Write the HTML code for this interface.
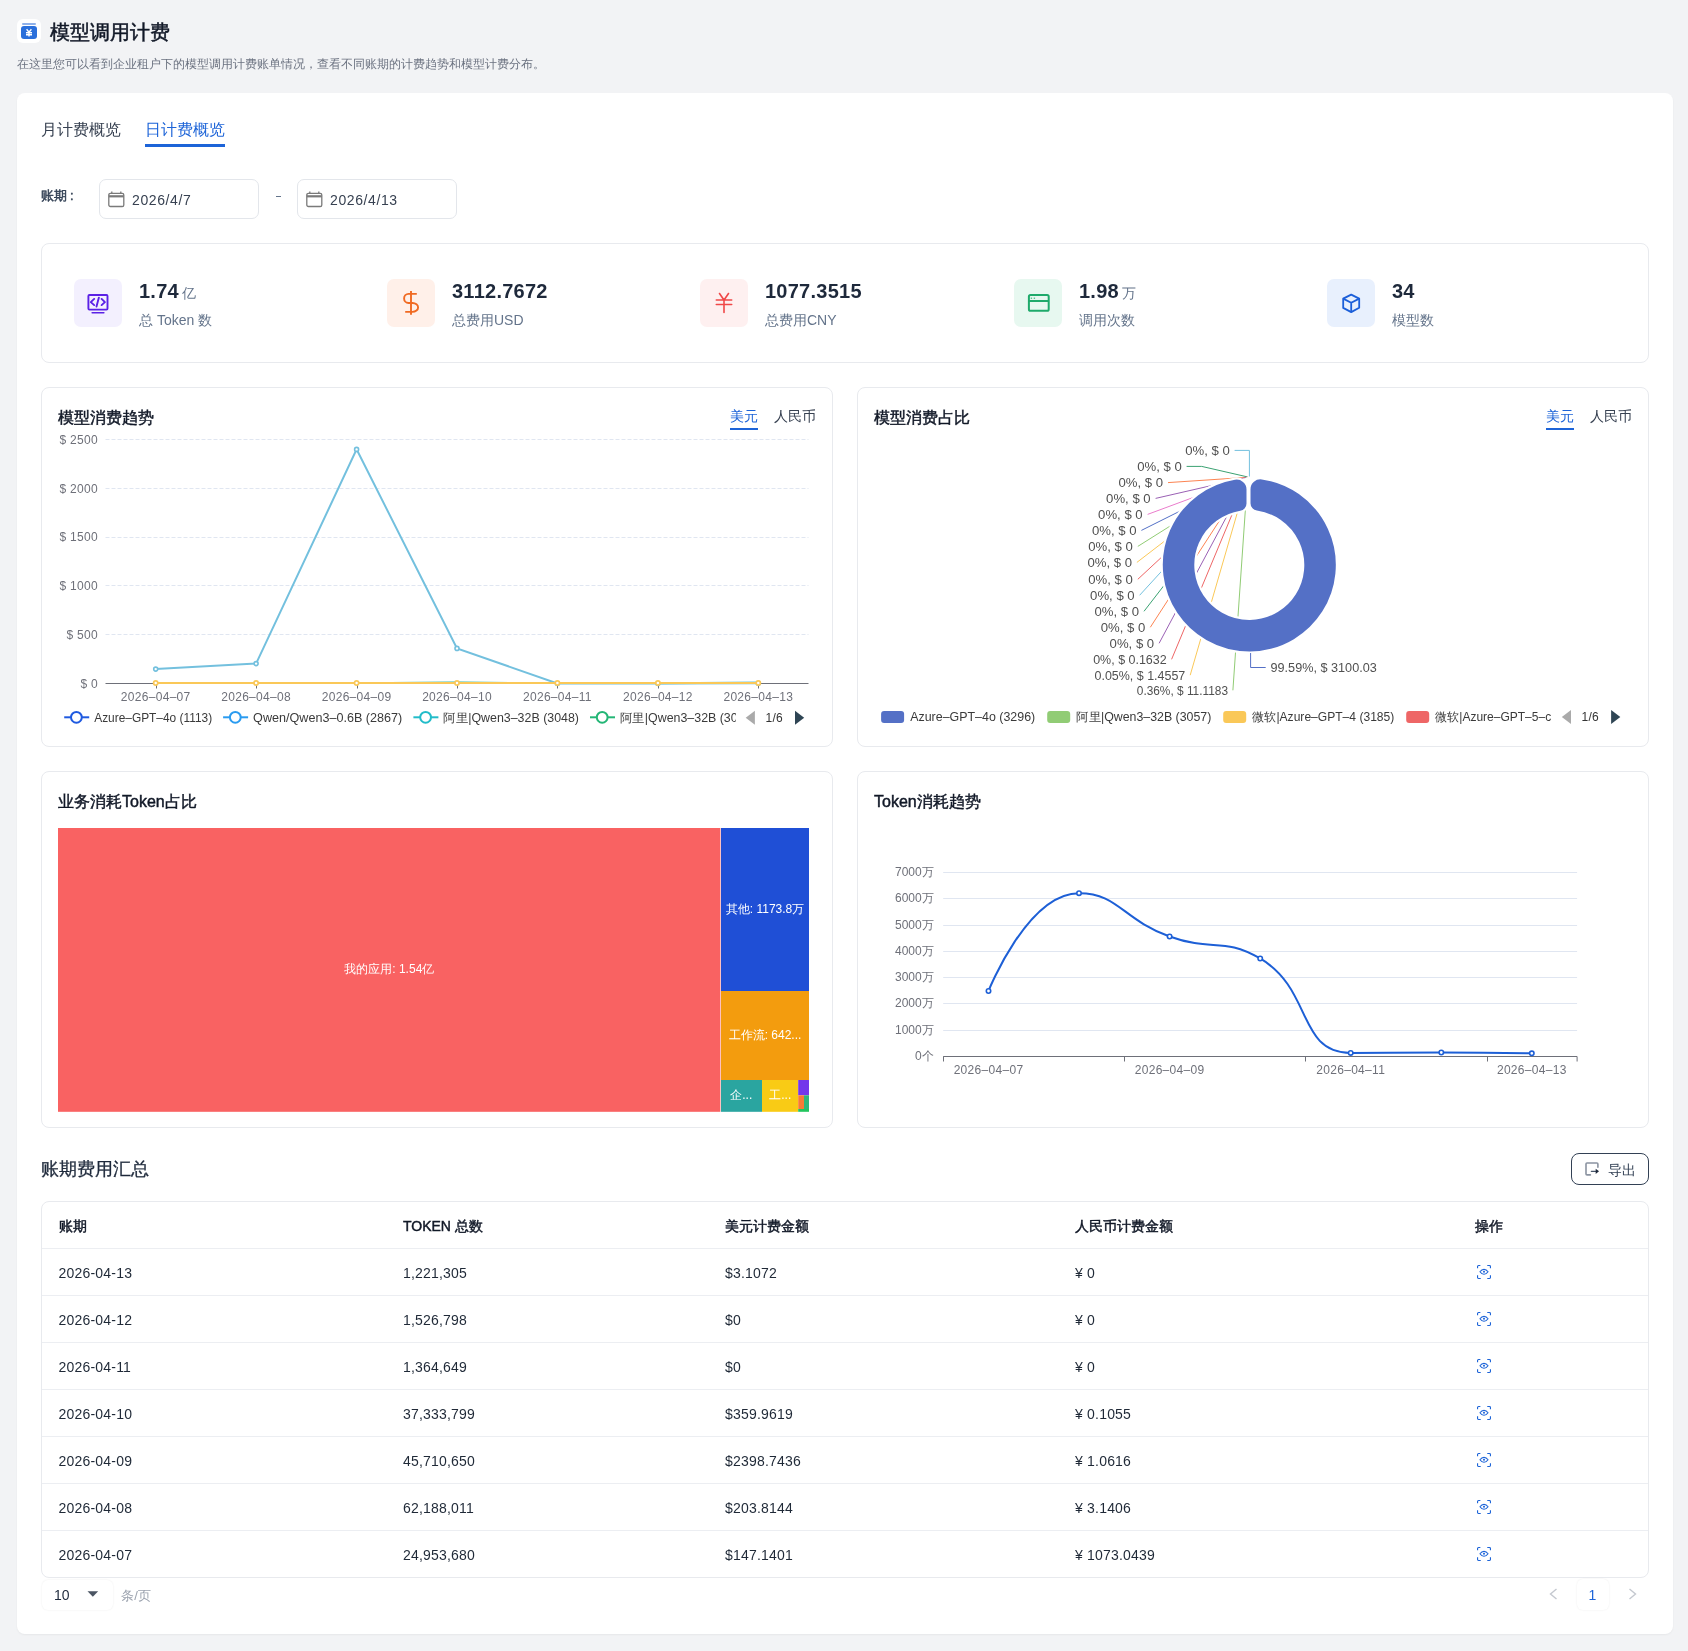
<!DOCTYPE html>
<html><head><meta charset="utf-8">
<style>
*{box-sizing:border-box;margin:0;padding:0}
html,body{width:1688px;height:1651px;overflow:hidden}
body{background:#f2f3f5;font-family:'Liberation Sans',sans-serif;color:#1f2937;position:relative}
.a{position:absolute}
.t{position:absolute;white-space:nowrap}
.box{position:absolute;background:#fff;border:1px solid #e8eaee;border-radius:8px}
svg{position:absolute;overflow:visible}
</style></head>
<body>
<div style="position:absolute;left:0;top:0;width:1688px;height:1651px;will-change:transform">
<div class="a" style="left:17px;top:19px;width:24px;height:24px;background:#fff;border-radius:6px"></div>
<div class="a" style="left:22px;top:23px;width:14px;height:1.6px;background:#8fb1ea;border-radius:1px"></div>
<svg style="left:21px;top:26px" width="16" height="13" viewBox="0 0 16 13"><rect width="16" height="13" rx="3" fill="#2a6fdb"/><path d="M5.6 3.2l2.4 3 2.4-3M5 6.8h6M5 8.7h6M8 6.2v4.2" stroke="#fff" stroke-width="1.4" fill="none"/></svg>
<div class="t" style="left:50px;top:22.78px;font-size:19.6px;line-height:19.6px;font-weight:400;color:#111827;-webkit-text-stroke:0.5px #111827;">模型调用计费</div>
<div class="t" style="left:17px;top:58.10px;font-size:12px;line-height:12px;font-weight:400;color:#6b7280;">在这里您可以看到企业租户下的模型调用计费账单情况，查看不同账期的计费趋势和模型计费分布。</div>
<div class="a" style="left:17px;top:93px;width:1656px;height:1541px;background:#fff;border-radius:8px;box-shadow:0 1px 2px rgba(0,0,0,0.05)"></div>
<div class="t" style="left:41px;top:121.70px;font-size:16px;line-height:16px;font-weight:400;color:#374151;">月计费概览</div>
<div class="t" style="left:145px;top:121.70px;font-size:16px;line-height:16px;font-weight:400;color:#1d64d8;">日计费概览</div>
<div class="a" style="left:145px;top:144px;width:80px;height:2.5px;background:#1d64d8"></div>
<div class="t" style="left:41px;top:188.95px;font-size:13px;line-height:13px;font-weight:400;color:#334155;-webkit-text-stroke:0.45px #334155;">账期<span style="margin-left:3px">:</span></div>
<div class="box" style="left:99px;top:179px;width:160px;height:40px;border-radius:7px;border-color:#e3e6eb"></div>
<svg style="left:108px;top:191px" width="16" height="16" viewBox="0 0 16 16" fill="none" stroke="#7a7a7a" stroke-width="1.3"><rect x="0.8" y="2.3" width="15" height="13.2" rx="1.6"/><path d="M0.8 5.3h15" stroke-width="2.2"/><path d="M3.8 0.6v2.4M12.8 0.6v2.4"/></svg>
<div class="t" style="left:132px;top:193.30px;font-size:14px;line-height:14px;font-weight:400;color:#374151;letter-spacing:0.6px">2026/4/7</div>
<div class="box" style="left:297px;top:179px;width:160px;height:40px;border-radius:7px;border-color:#e3e6eb"></div>
<svg style="left:306px;top:191px" width="16" height="16" viewBox="0 0 16 16" fill="none" stroke="#7a7a7a" stroke-width="1.3"><rect x="0.8" y="2.3" width="15" height="13.2" rx="1.6"/><path d="M0.8 5.3h15" stroke-width="2.2"/><path d="M3.8 0.6v2.4M12.8 0.6v2.4"/></svg>
<div class="t" style="left:330px;top:193.30px;font-size:14px;line-height:14px;font-weight:400;color:#374151;letter-spacing:0.6px">2026/4/13</div>
<div class="a" style="left:276px;top:196px;width:5px;height:1.3px;background:#64748b"></div>
<div class="box" style="left:41px;top:243px;width:1608px;height:120px"></div>
<div class="a" style="left:74px;top:279px;width:48px;height:48px;border-radius:7px;background:#f3f0fe"></div>
<svg style="left:74px;top:279px" width="48" height="48" viewBox="0 0 48 48" fill="none" stroke="#5b21e6" stroke-width="1.9" stroke-linecap="round" stroke-linejoin="round"><rect x="14.4" y="16" width="19.1" height="14.6" rx="1"/><path d="M18.1 33.7h11.8" stroke-width="1.5"/><path d="M20.2 19.9l-3.4 3.2 3.4 3M27.6 19.9l3.3 3.2-3.3 3M24.9 18.6l-2.4 9"/></svg>
<div class="t" style="left:139px;top:281px;font-size:20px;line-height:20px;font-weight:700;color:#1e293b;letter-spacing:0.25px">1.74<span style="font-size:14px;font-weight:400;color:#64748b;margin-left:3px">亿</span></div>
<div class="t" style="left:139px;top:313.10px;font-size:14px;line-height:14px;font-weight:400;color:#64748b;">总 Token 数</div>
<div class="a" style="left:387px;top:279px;width:48px;height:48px;border-radius:7px;background:#fff0e9"></div>
<svg style="left:387px;top:279px" width="48" height="48" viewBox="0 0 48 48" fill="none" stroke="#f06a22" stroke-width="1.7"><path d="M24 12.1v23.6" stroke-width="1.9"/><path d="M29.8 14.9H21.5A4.4 4.55 0 0 0 21.5 24H25.5A5.6 4.45 0 0 1 25.5 32.9H18.2" stroke-width="1.9"/></svg>
<div class="t" style="left:452px;top:281px;font-size:20px;line-height:20px;font-weight:700;color:#1e293b;letter-spacing:0.25px">3112.7672</div>
<div class="t" style="left:452px;top:313.10px;font-size:14px;line-height:14px;font-weight:400;color:#64748b;">总费用USD</div>
<div class="a" style="left:700px;top:279px;width:48px;height:48px;border-radius:7px;background:#fef0f0"></div>
<svg style="left:700px;top:279px" width="48" height="48" viewBox="0 0 48 48" fill="none" stroke="#f04848" stroke-width="1.6" stroke-linecap="round"><path d="M19.5 14.5l4.5 6.5 4.5-6.5M16.3 21h15.4M16.3 25.5h15.4M24 21v12.5"/></svg>
<div class="t" style="left:765px;top:281px;font-size:20px;line-height:20px;font-weight:700;color:#1e293b;letter-spacing:0.25px">1077.3515</div>
<div class="t" style="left:765px;top:313.10px;font-size:14px;line-height:14px;font-weight:400;color:#64748b;">总费用CNY</div>
<div class="a" style="left:1014px;top:279px;width:48px;height:48px;border-radius:7px;background:#e7f8f0"></div>
<svg style="left:1014px;top:279px" width="48" height="48" viewBox="0 0 48 48" fill="none" stroke="#1faa6b" stroke-width="2"><rect x="14.9" y="16" width="19.8" height="15.8" rx="1.6"/><path d="M14.9 22h19.8"/><path d="M16.7 19.2h1.4M19.7 19.2h1.4" stroke-width="1.4" stroke="#5cc594"/></svg>
<div class="t" style="left:1079px;top:281px;font-size:20px;line-height:20px;font-weight:700;color:#1e293b;letter-spacing:0.25px">1.98<span style="font-size:14px;font-weight:400;color:#64748b;margin-left:3px">万</span></div>
<div class="t" style="left:1079px;top:313.10px;font-size:14px;line-height:14px;font-weight:400;color:#64748b;">调用次数</div>
<div class="a" style="left:1327px;top:279px;width:48px;height:48px;border-radius:7px;background:#e8f0fd"></div>
<svg style="left:1327px;top:279px" width="48" height="48" viewBox="0 0 48 48" fill="none" stroke="#1c5fd9" stroke-width="1.8" stroke-linejoin="round"><path d="M24.2 15.6l8 4v9.2l-8 4.3-8-4.2v-9.3z"/><path d="M16.2 19.6l8 4.2 8-4.2M24.2 23.8v9.3"/></svg>
<div class="t" style="left:1392px;top:281px;font-size:20px;line-height:20px;font-weight:700;color:#1e293b;letter-spacing:0.25px">34</div>
<div class="t" style="left:1392px;top:313.10px;font-size:14px;line-height:14px;font-weight:400;color:#64748b;">模型数</div>
<div class="box" style="left:41px;top:387px;width:792px;height:360px"></div>
<div class="box" style="left:857px;top:387px;width:792px;height:360px"></div>
<div class="box" style="left:41px;top:771px;width:792px;height:357px"></div>
<div class="box" style="left:857px;top:771px;width:792px;height:357px"></div>
<div class="t" style="left:58px;top:409.80px;font-size:16px;line-height:16px;font-weight:400;color:#111827;-webkit-text-stroke:0.45px #111827;">模型消费趋势</div>
<div class="t" style="left:730px;top:409.10px;font-size:14px;line-height:14px;font-weight:400;color:#1d64d8;">美元</div>
<div class="t" style="left:774px;top:409.10px;font-size:14px;line-height:14px;font-weight:400;color:#374151;">人民币</div>
<div class="a" style="left:729.5px;top:428px;width:28px;height:2px;background:#1d64d8"></div>
<div class="t" style="left:874px;top:409.80px;font-size:16px;line-height:16px;font-weight:400;color:#111827;-webkit-text-stroke:0.45px #111827;">模型消费占比</div>
<div class="t" style="left:1546px;top:409.10px;font-size:14px;line-height:14px;font-weight:400;color:#1d64d8;">美元</div>
<div class="t" style="left:1590px;top:409.10px;font-size:14px;line-height:14px;font-weight:400;color:#374151;">人民币</div>
<div class="a" style="left:1545.5px;top:428px;width:28px;height:2px;background:#1d64d8"></div>
<div class="t" style="left:58px;top:793.60px;font-size:16px;line-height:16px;font-weight:400;color:#111827;-webkit-text-stroke:0.45px #111827;">业务消耗Token占比</div>
<div class="t" style="left:874px;top:793.60px;font-size:16px;line-height:16px;font-weight:400;color:#111827;-webkit-text-stroke:0.45px #111827;">Token消耗趋势</div>
<svg style="left:0;top:0" width="1688" height="1651" viewBox="0 0 1688 1651">
<line x1="105.5" y1="634.5" x2="808.5" y2="634.5" stroke="#e0e6f1" stroke-dasharray="4 2"/>
<line x1="105.5" y1="585.5" x2="808.5" y2="585.5" stroke="#e0e6f1" stroke-dasharray="4 2"/>
<line x1="105.5" y1="537.5" x2="808.5" y2="537.5" stroke="#e0e6f1" stroke-dasharray="4 2"/>
<line x1="105.5" y1="488.5" x2="808.5" y2="488.5" stroke="#e0e6f1" stroke-dasharray="4 2"/>
<line x1="105.5" y1="439.5" x2="808.5" y2="439.5" stroke="#e0e6f1" stroke-dasharray="4 2"/>
<text x="98" y="687.7" text-anchor="end" font-size="12" fill="#6e7079" letter-spacing="0.3" font-family="'Liberation Sans',sans-serif">$ 0</text>
<text x="98" y="638.9" text-anchor="end" font-size="12" fill="#6e7079" letter-spacing="0.3" font-family="'Liberation Sans',sans-serif">$ 500</text>
<text x="98" y="590.1" text-anchor="end" font-size="12" fill="#6e7079" letter-spacing="0.3" font-family="'Liberation Sans',sans-serif">$ 1000</text>
<text x="98" y="541.3" text-anchor="end" font-size="12" fill="#6e7079" letter-spacing="0.3" font-family="'Liberation Sans',sans-serif">$ 1500</text>
<text x="98" y="492.5" text-anchor="end" font-size="12" fill="#6e7079" letter-spacing="0.3" font-family="'Liberation Sans',sans-serif">$ 2000</text>
<text x="98" y="443.7" text-anchor="end" font-size="12" fill="#6e7079" letter-spacing="0.3" font-family="'Liberation Sans',sans-serif">$ 2500</text>
<line x1="105.5" y1="683.5" x2="808.5" y2="683.5" stroke="#6e7079"/>
<line x1="156.5" y1="683.5" x2="156.5" y2="688.5" stroke="#6e7079"/>
<text x="155.7" y="700.8" text-anchor="middle" font-size="12" fill="#6e7079" letter-spacing="0.3" font-family="'Liberation Sans',sans-serif">2026–04–07</text>
<line x1="256.5" y1="683.5" x2="256.5" y2="688.5" stroke="#6e7079"/>
<text x="256.1" y="700.8" text-anchor="middle" font-size="12" fill="#6e7079" letter-spacing="0.3" font-family="'Liberation Sans',sans-serif">2026–04–08</text>
<line x1="357.5" y1="683.5" x2="357.5" y2="688.5" stroke="#6e7079"/>
<text x="356.6" y="700.8" text-anchor="middle" font-size="12" fill="#6e7079" letter-spacing="0.3" font-family="'Liberation Sans',sans-serif">2026–04–09</text>
<line x1="457.5" y1="683.5" x2="457.5" y2="688.5" stroke="#6e7079"/>
<text x="457.0" y="700.8" text-anchor="middle" font-size="12" fill="#6e7079" letter-spacing="0.3" font-family="'Liberation Sans',sans-serif">2026–04–10</text>
<line x1="557.5" y1="683.5" x2="557.5" y2="688.5" stroke="#6e7079"/>
<text x="557.4" y="700.8" text-anchor="middle" font-size="12" fill="#6e7079" letter-spacing="0.3" font-family="'Liberation Sans',sans-serif">2026–04–11</text>
<line x1="658.5" y1="683.5" x2="658.5" y2="688.5" stroke="#6e7079"/>
<text x="657.9" y="700.8" text-anchor="middle" font-size="12" fill="#6e7079" letter-spacing="0.3" font-family="'Liberation Sans',sans-serif">2026–04–12</text>
<line x1="758.5" y1="683.5" x2="758.5" y2="688.5" stroke="#6e7079"/>
<text x="758.3" y="700.8" text-anchor="middle" font-size="12" fill="#6e7079" letter-spacing="0.3" font-family="'Liberation Sans',sans-serif">2026–04–13</text>
<polyline points="356.6,683.0 457.0,682.4 557.4,683.0" fill="none" stroke="#26b3a6" stroke-width="1.6"/>
<polyline points="657.9,683.5 758.3,682.3" fill="none" stroke="#8fd3e6" stroke-width="2"/>
<polyline points="155.7,669.1 256.1,663.6 356.6,449.4 457.0,648.4 557.4,683.5 657.9,683.5 758.3,683.2" fill="none" stroke="#73c0de" stroke-width="2"/>
<circle cx="155.7" cy="669.1" r="2" fill="#fff" stroke="#73c0de" stroke-width="1.6"/>
<circle cx="256.1" cy="663.6" r="2" fill="#fff" stroke="#73c0de" stroke-width="1.6"/>
<circle cx="356.6" cy="449.4" r="2" fill="#fff" stroke="#73c0de" stroke-width="1.6"/>
<circle cx="457.0" cy="648.4" r="2" fill="#fff" stroke="#73c0de" stroke-width="1.6"/>
<circle cx="557.4" cy="683.5" r="2" fill="#fff" stroke="#73c0de" stroke-width="1.6"/>
<circle cx="657.9" cy="683.5" r="2" fill="#fff" stroke="#73c0de" stroke-width="1.6"/>
<circle cx="758.3" cy="683.2" r="2" fill="#fff" stroke="#73c0de" stroke-width="1.6"/>
<line x1="155.7" y1="683.0" x2="758.3" y2="683.0" stroke="#fac858" stroke-width="2"/>
<circle cx="155.7" cy="683.0" r="2.1" fill="#fff" stroke="#fac858" stroke-width="1.7"/>
<circle cx="256.1" cy="683.0" r="2.1" fill="#fff" stroke="#fac858" stroke-width="1.7"/>
<circle cx="356.6" cy="683.0" r="2.1" fill="#fff" stroke="#fac858" stroke-width="1.7"/>
<circle cx="457.0" cy="683.0" r="2.1" fill="#fff" stroke="#fac858" stroke-width="1.7"/>
<circle cx="557.4" cy="683.0" r="2.1" fill="#fff" stroke="#fac858" stroke-width="1.7"/>
<circle cx="657.9" cy="683.0" r="2.1" fill="#fff" stroke="#fac858" stroke-width="1.7"/>
<circle cx="758.3" cy="683.0" r="2.1" fill="#fff" stroke="#fac858" stroke-width="1.7"/>
<defs><clipPath id="lg1"><rect x="40" y="700" width="696" height="40"/></clipPath></defs>
<g clip-path="url(#lg1)">
<line x1="64.2" y1="717.3" x2="89.2" y2="717.3" stroke="#1f5ae0" stroke-width="2"/>
<circle cx="76.4" cy="717.3" r="5.4" fill="#fff" stroke="#1f5ae0" stroke-width="2"/>
<text x="94.2" y="721.6" font-size="12" fill="#3a3a3a" textLength="118" lengthAdjust="spacingAndGlyphs" font-family="'Liberation Sans',sans-serif">Azure–GPT–4o (1113)</text>
<line x1="223.1" y1="717.3" x2="248.1" y2="717.3" stroke="#2a9bf0" stroke-width="2"/>
<circle cx="235.29999999999998" cy="717.3" r="5.4" fill="#fff" stroke="#2a9bf0" stroke-width="2"/>
<text x="253.1" y="721.6" font-size="12" fill="#3a3a3a" textLength="149.2" lengthAdjust="spacingAndGlyphs" font-family="'Liberation Sans',sans-serif">Qwen/Qwen3–0.6B (2867)</text>
<line x1="413.4" y1="717.3" x2="438.4" y2="717.3" stroke="#22bcc9" stroke-width="2"/>
<circle cx="425.59999999999997" cy="717.3" r="5.4" fill="#fff" stroke="#22bcc9" stroke-width="2"/>
<text x="443.4" y="721.6" font-size="12" fill="#3a3a3a" textLength="135.6" lengthAdjust="spacingAndGlyphs" font-family="'Liberation Sans',sans-serif">阿里|Qwen3–32B (3048)</text>
<line x1="590" y1="717.3" x2="615" y2="717.3" stroke="#24b676" stroke-width="2"/>
<circle cx="602.2" cy="717.3" r="5.4" fill="#fff" stroke="#24b676" stroke-width="2"/>
<text x="620" y="721.6" font-size="12" fill="#3a3a3a" textLength="135.6" lengthAdjust="spacingAndGlyphs" font-family="'Liberation Sans',sans-serif">阿里|Qwen3–32B (3048)</text>
</g>
<path d="M754.9 710.8v13.9l-9.2-6.95z" fill="#aaa"/>
<text x="765.5" y="721.6" font-size="12" fill="#333" letter-spacing="0.3" font-family="'Liberation Sans',sans-serif">1/6</text>
<path d="M795 710.8v13.9l9.2-6.95z" fill="#2f4554"/>
</svg>
<svg style="left:0;top:0" width="1688" height="1651" viewBox="0 0 1688 1651">
<polyline points="1234.6,450.4 1249.4,450.4 1249.4,476.5" fill="none" stroke="#73c0de" stroke-width="1"/>
<polyline points="1186.6,466.4 1201.7,466.4 1247.0,476.8" fill="none" stroke="#3ba272" stroke-width="1"/>
<polyline points="1168.0,482.6 1247.6,477.3" fill="none" stroke="#fc8452" stroke-width="1"/>
<polyline points="1155.6,498.4 1247.6,477.3" fill="none" stroke="#9a60b4" stroke-width="1"/>
<polyline points="1147.6,514.4 1247.6,477.3" fill="none" stroke="#ea7ccc" stroke-width="1"/>
<polyline points="1141.4,530.4 1247.6,477.3" fill="none" stroke="#5470c6" stroke-width="1"/>
<polyline points="1137.8,546.4 1247.6,477.3" fill="none" stroke="#91cc75" stroke-width="1"/>
<polyline points="1136.9,562.4 1247.6,477.3" fill="none" stroke="#fac858" stroke-width="1"/>
<polyline points="1137.8,579.3 1247.6,477.3" fill="none" stroke="#ee6666" stroke-width="1"/>
<polyline points="1139.6,595.3 1247.6,477.3" fill="none" stroke="#73c0de" stroke-width="1"/>
<polyline points="1144.0,611.3 1247.6,477.3" fill="none" stroke="#3ba272" stroke-width="1"/>
<polyline points="1150.3,627.3 1247.6,477.3" fill="none" stroke="#fc8452" stroke-width="1"/>
<polyline points="1159.1,643.3 1247.6,477.3" fill="none" stroke="#9a60b4" stroke-width="1"/>
<polyline points="1171.6,659.3 1247.6,477.3" fill="none" stroke="#ee6666" stroke-width="1"/>
<polyline points="1190.2,675.2 1247.6,477.3" fill="none" stroke="#fac858" stroke-width="1"/>
<polyline points="1232.9,690.3 1247.6,477.3" fill="none" stroke="#91cc75" stroke-width="1"/>
<rect x="1246.4" y="477.2" width="4.2" height="34" fill="#fff"/>
<polygon points="1248,477.6 1238.5,479.6 1246.6,494" fill="#fff"/>
<path d="M1261.99 478.32 A87.6 87.6 0 1 1 1234.78 478.61 A11 11 0 0 1 1247.60 489.46 L1247.60 503.44 A8.5 8.5 0 0 1 1240.49 511.82 A53.9 53.9 0 1 0 1256.73 511.61 A8.5 8.5 0 0 1 1249.40 503.20 L1249.40 489.21 A11 11 0 0 1 1261.99 478.32 Z" fill="#5470c6" stroke="#fff" stroke-width="2.2"/>
<polyline points="1250.6,653 1250.6,667.5 1265.7,667.5" fill="none" stroke="#5470c6" stroke-width="1"/>
<text x="1229.8" y="454.7" text-anchor="end" font-size="12" fill="#505050" textLength="44.6" lengthAdjust="spacingAndGlyphs" font-family="'Liberation Sans',sans-serif">0%, $ 0</text>
<text x="1181.8" y="470.7" text-anchor="end" font-size="12" fill="#505050" textLength="44.6" lengthAdjust="spacingAndGlyphs" font-family="'Liberation Sans',sans-serif">0%, $ 0</text>
<text x="1163.1" y="486.9" text-anchor="end" font-size="12" fill="#505050" textLength="44.6" lengthAdjust="spacingAndGlyphs" font-family="'Liberation Sans',sans-serif">0%, $ 0</text>
<text x="1150.7" y="502.7" text-anchor="end" font-size="12" fill="#505050" textLength="44.6" lengthAdjust="spacingAndGlyphs" font-family="'Liberation Sans',sans-serif">0%, $ 0</text>
<text x="1142.7" y="518.7" text-anchor="end" font-size="12" fill="#505050" textLength="44.6" lengthAdjust="spacingAndGlyphs" font-family="'Liberation Sans',sans-serif">0%, $ 0</text>
<text x="1136.5" y="534.7" text-anchor="end" font-size="12" fill="#505050" textLength="44.6" lengthAdjust="spacingAndGlyphs" font-family="'Liberation Sans',sans-serif">0%, $ 0</text>
<text x="1132.9" y="550.7" text-anchor="end" font-size="12" fill="#505050" textLength="44.6" lengthAdjust="spacingAndGlyphs" font-family="'Liberation Sans',sans-serif">0%, $ 0</text>
<text x="1132.0" y="566.7" text-anchor="end" font-size="12" fill="#505050" textLength="44.6" lengthAdjust="spacingAndGlyphs" font-family="'Liberation Sans',sans-serif">0%, $ 0</text>
<text x="1132.9" y="583.6" text-anchor="end" font-size="12" fill="#505050" textLength="44.6" lengthAdjust="spacingAndGlyphs" font-family="'Liberation Sans',sans-serif">0%, $ 0</text>
<text x="1134.7" y="599.6" text-anchor="end" font-size="12" fill="#505050" textLength="44.6" lengthAdjust="spacingAndGlyphs" font-family="'Liberation Sans',sans-serif">0%, $ 0</text>
<text x="1139.1" y="615.6" text-anchor="end" font-size="12" fill="#505050" textLength="44.6" lengthAdjust="spacingAndGlyphs" font-family="'Liberation Sans',sans-serif">0%, $ 0</text>
<text x="1145.4" y="631.6" text-anchor="end" font-size="12" fill="#505050" textLength="44.6" lengthAdjust="spacingAndGlyphs" font-family="'Liberation Sans',sans-serif">0%, $ 0</text>
<text x="1154.2" y="647.6" text-anchor="end" font-size="12" fill="#505050" textLength="44.6" lengthAdjust="spacingAndGlyphs" font-family="'Liberation Sans',sans-serif">0%, $ 0</text>
<text x="1166.7" y="663.6" text-anchor="end" font-size="12" fill="#505050" textLength="73.5" lengthAdjust="spacingAndGlyphs" font-family="'Liberation Sans',sans-serif">0%, $ 0.1632</text>
<text x="1185.3" y="679.5" text-anchor="end" font-size="12" fill="#505050" textLength="90.8" lengthAdjust="spacingAndGlyphs" font-family="'Liberation Sans',sans-serif">0.05%, $ 1.4557</text>
<text x="1228.0" y="694.6" text-anchor="end" font-size="12" fill="#505050" textLength="91.2" lengthAdjust="spacingAndGlyphs" font-family="'Liberation Sans',sans-serif">0.36%, $ 11.1183</text>
<text x="1270.5" y="671.5" font-size="12" fill="#505050" textLength="106.3" lengthAdjust="spacingAndGlyphs" font-family="'Liberation Sans',sans-serif">99.59%, $ 3100.03</text>
<defs><clipPath id="lg2"><rect x="860" y="700" width="692" height="40"/></clipPath></defs>
<g clip-path="url(#lg2)">
<rect x="881.1" y="711" width="23" height="12" rx="3" fill="#5470c6"/>
<text x="910.2" y="721.3" font-size="12" fill="#3a3a3a" textLength="125" lengthAdjust="spacingAndGlyphs" font-family="'Liberation Sans',sans-serif">Azure–GPT–4o (3296)</text>
<rect x="1047.2" y="711" width="23" height="12" rx="3" fill="#91cc75"/>
<text x="1076.3" y="721.3" font-size="12" fill="#3a3a3a" textLength="135" lengthAdjust="spacingAndGlyphs" font-family="'Liberation Sans',sans-serif">阿里|Qwen3–32B (3057)</text>
<rect x="1223.2" y="711" width="23" height="12" rx="3" fill="#fac858"/>
<text x="1252.3" y="721.3" font-size="12" fill="#3a3a3a" textLength="142" lengthAdjust="spacingAndGlyphs" font-family="'Liberation Sans',sans-serif">微软|Azure–GPT–4 (3185)</text>
<rect x="1406.2" y="711" width="23" height="12" rx="3" fill="#ee6666"/>
<text x="1435.3" y="721.3" font-size="12" fill="#3a3a3a"  font-family="'Liberation Sans',sans-serif">微软|Azure–GPT–5–chat (3001)</text>
</g>
<path d="M1571.0 710.05v13.9l-9.2-6.95z" fill="#aaa"/>
<text x="1581.5" y="721.3" font-size="12" fill="#333" letter-spacing="0.3" font-family="'Liberation Sans',sans-serif">1/6</text>
<path d="M1611.1 710.05v13.9l9.2-6.95z" fill="#2f4554"/>
</svg>
<svg style="left:0;top:0" width="1688" height="1651" viewBox="0 0 1688 1651">
<rect x="58" y="828" width="662.40" height="283.80" fill="#f96262"/>
<rect x="721" y="828" width="88.00" height="163.00" fill="#1f4fd6"/>
<rect x="721" y="991" width="88.00" height="89.00" fill="#f39c0e"/>
<rect x="721" y="1080" width="41.00" height="31.80" fill="#2aa5a0"/>
<rect x="762" y="1080" width="36.20" height="31.80" fill="#f9cb15"/>
<rect x="798.2" y="1080" width="10.80" height="15.30" fill="#7337eb"/>
<rect x="798.2" y="1095.3" width="5.80" height="13.70" fill="#f97a35"/>
<rect x="804" y="1095.3" width="5.00" height="13.70" fill="#2fb67b"/>
<rect x="798.2" y="1109" width="10.80" height="2.80" fill="#22c55e"/>
<text x="389.3" y="972.7" text-anchor="middle" font-size="12" fill="#fff" font-family="'Liberation Sans',sans-serif">我的应用: 1.54亿</text>
<text x="765" y="912.5" text-anchor="middle" font-size="12" fill="#fff" font-family="'Liberation Sans',sans-serif">其他: 1173.8万</text>
<text x="765" y="1039.0" text-anchor="middle" font-size="12" fill="#fff" font-family="'Liberation Sans',sans-serif">工作流: 642...</text>
<text x="741.3" y="1099.3" text-anchor="middle" font-size="12" fill="#fff" font-family="'Liberation Sans',sans-serif">企...</text>
<text x="780.3" y="1099.3" text-anchor="middle" font-size="12" fill="#fff" font-family="'Liberation Sans',sans-serif">工...</text>
</svg>
<svg style="left:0;top:0" width="1688" height="1651" viewBox="0 0 1688 1651">
<line x1="943.2" y1="1030.5" x2="1577.1" y2="1030.5" stroke="#e0e6f1"/>
<line x1="943.2" y1="1003.5" x2="1577.1" y2="1003.5" stroke="#e0e6f1"/>
<line x1="943.2" y1="977.5" x2="1577.1" y2="977.5" stroke="#e0e6f1"/>
<line x1="943.2" y1="951.5" x2="1577.1" y2="951.5" stroke="#e0e6f1"/>
<line x1="943.2" y1="925.5" x2="1577.1" y2="925.5" stroke="#e0e6f1"/>
<line x1="943.2" y1="898.5" x2="1577.1" y2="898.5" stroke="#e0e6f1"/>
<line x1="943.2" y1="872.5" x2="1577.1" y2="872.5" stroke="#e0e6f1"/>
<text x="933.7" y="1059.9" text-anchor="end" font-size="12" fill="#6e7079" font-family="'Liberation Sans',sans-serif">0个</text>
<text x="933.7" y="1033.6" text-anchor="end" font-size="12" fill="#6e7079" font-family="'Liberation Sans',sans-serif">1000万</text>
<text x="933.7" y="1007.4" text-anchor="end" font-size="12" fill="#6e7079" font-family="'Liberation Sans',sans-serif">2000万</text>
<text x="933.7" y="981.1" text-anchor="end" font-size="12" fill="#6e7079" font-family="'Liberation Sans',sans-serif">3000万</text>
<text x="933.7" y="954.9" text-anchor="end" font-size="12" fill="#6e7079" font-family="'Liberation Sans',sans-serif">4000万</text>
<text x="933.7" y="928.6" text-anchor="end" font-size="12" fill="#6e7079" font-family="'Liberation Sans',sans-serif">5000万</text>
<text x="933.7" y="902.3" text-anchor="end" font-size="12" fill="#6e7079" font-family="'Liberation Sans',sans-serif">6000万</text>
<text x="933.7" y="876.1" text-anchor="end" font-size="12" fill="#6e7079" font-family="'Liberation Sans',sans-serif">7000万</text>
<line x1="943.2" y1="1056.5" x2="1577.1" y2="1056.5" stroke="#6e7079"/>
<line x1="943.5" y1="1056.5" x2="943.5" y2="1061.5" stroke="#6e7079"/>
<line x1="1124.5" y1="1056.5" x2="1124.5" y2="1061.5" stroke="#6e7079"/>
<line x1="1305.5" y1="1056.5" x2="1305.5" y2="1061.5" stroke="#6e7079"/>
<line x1="1487.5" y1="1056.5" x2="1487.5" y2="1061.5" stroke="#6e7079"/>
<line x1="1577.1" y1="1056.5" x2="1577.1" y2="1061.5" stroke="#6e7079"/>
<text x="988.5" y="1074.0" text-anchor="middle" font-size="12" fill="#6e7079" letter-spacing="0.3" font-family="'Liberation Sans',sans-serif">2026–04–07</text>
<text x="1169.6" y="1074.0" text-anchor="middle" font-size="12" fill="#6e7079" letter-spacing="0.3" font-family="'Liberation Sans',sans-serif">2026–04–09</text>
<text x="1350.7" y="1074.0" text-anchor="middle" font-size="12" fill="#6e7079" letter-spacing="0.3" font-family="'Liberation Sans',sans-serif">2026–04–11</text>
<text x="1531.8" y="1074.0" text-anchor="middle" font-size="12" fill="#6e7079" letter-spacing="0.3" font-family="'Liberation Sans',sans-serif">2026–04–13</text>
<path d="M988.48 990.97 C988.48 990.97 1027.38 893.19 1079.04 893.19 C1117.94 893.19 1122.64 919.54 1169.59 936.46 C1213.19 952.18 1222.48 936.46 1260.15 958.46 C1313.04 989.35 1297.19 1052.92 1350.71 1052.92 C1387.75 1052.92 1395.99 1052.49 1441.26 1052.49 C1486.54 1052.49 1531.82 1053.29 1531.82 1053.29" fill="none" stroke="#1d5fd6" stroke-width="2"/>
<circle cx="988.5" cy="991.0" r="2.2" fill="#fff" stroke="#1d5fd6" stroke-width="1.6"/>
<circle cx="1079.0" cy="893.2" r="2.2" fill="#fff" stroke="#1d5fd6" stroke-width="1.6"/>
<circle cx="1169.6" cy="936.5" r="2.2" fill="#fff" stroke="#1d5fd6" stroke-width="1.6"/>
<circle cx="1260.2" cy="958.5" r="2.2" fill="#fff" stroke="#1d5fd6" stroke-width="1.6"/>
<circle cx="1350.7" cy="1052.9" r="2.2" fill="#fff" stroke="#1d5fd6" stroke-width="1.6"/>
<circle cx="1441.3" cy="1052.5" r="2.2" fill="#fff" stroke="#1d5fd6" stroke-width="1.6"/>
<circle cx="1531.8" cy="1053.3" r="2.2" fill="#fff" stroke="#1d5fd6" stroke-width="1.6"/>
</svg>
<div class="t" style="left:41px;top:1160.40px;font-size:18px;line-height:18px;font-weight:400;color:#1e293b;-webkit-text-stroke:0.3px #1e293b;">账期费用汇总</div>
<div class="a" style="left:1571px;top:1153px;width:78px;height:32px;border:1px solid #334155;border-radius:8px;background:#fff"></div>
<svg style="left:1584px;top:1161px" width="16" height="16" viewBox="0 0 16 16" fill="none"><path d="M6.4 13.9H3a1 1 0 0 1-1-1V3a1 1 0 0 1 1-1h9.9a1 1 0 0 1 1 1v3.3" stroke="#8b93a1" stroke-width="1.6" stroke-linecap="round"/><path d="M7.3 10.3h4.6" stroke="#475569" stroke-width="1.2" stroke-linecap="round"/><path d="M11.7 7.8l3.3 2.5-3.3 2.6z" fill="#1e293b"/></svg>
<div class="t" style="left:1608px;top:1162.70px;font-size:14px;line-height:14px;font-weight:400;color:#334155;">导出</div>
<div class="box" style="left:41px;top:1201px;width:1608px;height:377px"></div>
<div class="t" style="left:58.5px;top:1218.70px;font-size:14px;line-height:14px;font-weight:400;color:#111827;-webkit-text-stroke:0.45px #111827;">账期</div>
<div class="t" style="left:403px;top:1218.70px;font-size:14px;line-height:14px;font-weight:400;color:#111827;-webkit-text-stroke:0.45px #111827;">TOKEN 总数</div>
<div class="t" style="left:725px;top:1218.70px;font-size:14px;line-height:14px;font-weight:400;color:#111827;-webkit-text-stroke:0.45px #111827;">美元计费金额</div>
<div class="t" style="left:1075px;top:1218.70px;font-size:14px;line-height:14px;font-weight:400;color:#111827;-webkit-text-stroke:0.45px #111827;">人民币计费金额</div>
<div class="t" style="left:1474.5px;top:1218.70px;font-size:14px;line-height:14px;font-weight:400;color:#111827;-webkit-text-stroke:0.45px #111827;">操作</div>
<div class="a" style="left:42px;top:1248px;width:1606px;height:1px;background:#eceef2"></div>
<div class="t" style="left:58.5px;top:1265.90px;font-size:14px;line-height:14px;font-weight:400;color:#1f2937;letter-spacing:0.2px">2026-04-13</div>
<div class="t" style="left:403px;top:1265.90px;font-size:14px;line-height:14px;font-weight:400;color:#1f2937;letter-spacing:0.2px">1,221,305</div>
<div class="t" style="left:725px;top:1265.90px;font-size:14px;line-height:14px;font-weight:400;color:#1f2937;letter-spacing:0.2px">$3.1072</div>
<div class="t" style="left:1075px;top:1265.90px;font-size:14px;line-height:14px;font-weight:400;color:#1f2937;letter-spacing:0.2px">¥ 0</div>
<svg style="left:1476.7px;top:1265.2px" width="14" height="14" viewBox="0 0 15 15" fill="none" stroke="#1d64d8" stroke-width="1.2"><path d="M0.6 3.6V1.6a1 1 0 0 1 1-1h2M11 0.6h2.4a1 1 0 0 1 1 1v2M14.4 11v2.4a1 1 0 0 1-1 1H11M4 14.4H1.6a1 1 0 0 1-1-1V11"/><path d="M3.2 7.3c1.2-1.8 2.6-2.6 4.3-2.6s3.1 0.8 4.3 2.6c-1.2 1.8-2.6 2.6-4.3 2.6S4.4 9.1 3.2 7.3z"/><circle cx="7.5" cy="7.3" r="1.1" fill="#1d64d8" stroke="none"/></svg>
<div class="a" style="left:42px;top:1295px;width:1606px;height:1px;background:#eceef2"></div>
<div class="t" style="left:58.5px;top:1312.90px;font-size:14px;line-height:14px;font-weight:400;color:#1f2937;letter-spacing:0.2px">2026-04-12</div>
<div class="t" style="left:403px;top:1312.90px;font-size:14px;line-height:14px;font-weight:400;color:#1f2937;letter-spacing:0.2px">1,526,798</div>
<div class="t" style="left:725px;top:1312.90px;font-size:14px;line-height:14px;font-weight:400;color:#1f2937;letter-spacing:0.2px">$0</div>
<div class="t" style="left:1075px;top:1312.90px;font-size:14px;line-height:14px;font-weight:400;color:#1f2937;letter-spacing:0.2px">¥ 0</div>
<svg style="left:1476.7px;top:1312.2px" width="14" height="14" viewBox="0 0 15 15" fill="none" stroke="#1d64d8" stroke-width="1.2"><path d="M0.6 3.6V1.6a1 1 0 0 1 1-1h2M11 0.6h2.4a1 1 0 0 1 1 1v2M14.4 11v2.4a1 1 0 0 1-1 1H11M4 14.4H1.6a1 1 0 0 1-1-1V11"/><path d="M3.2 7.3c1.2-1.8 2.6-2.6 4.3-2.6s3.1 0.8 4.3 2.6c-1.2 1.8-2.6 2.6-4.3 2.6S4.4 9.1 3.2 7.3z"/><circle cx="7.5" cy="7.3" r="1.1" fill="#1d64d8" stroke="none"/></svg>
<div class="a" style="left:42px;top:1342px;width:1606px;height:1px;background:#eceef2"></div>
<div class="t" style="left:58.5px;top:1359.90px;font-size:14px;line-height:14px;font-weight:400;color:#1f2937;letter-spacing:0.2px">2026-04-11</div>
<div class="t" style="left:403px;top:1359.90px;font-size:14px;line-height:14px;font-weight:400;color:#1f2937;letter-spacing:0.2px">1,364,649</div>
<div class="t" style="left:725px;top:1359.90px;font-size:14px;line-height:14px;font-weight:400;color:#1f2937;letter-spacing:0.2px">$0</div>
<div class="t" style="left:1075px;top:1359.90px;font-size:14px;line-height:14px;font-weight:400;color:#1f2937;letter-spacing:0.2px">¥ 0</div>
<svg style="left:1476.7px;top:1359.2px" width="14" height="14" viewBox="0 0 15 15" fill="none" stroke="#1d64d8" stroke-width="1.2"><path d="M0.6 3.6V1.6a1 1 0 0 1 1-1h2M11 0.6h2.4a1 1 0 0 1 1 1v2M14.4 11v2.4a1 1 0 0 1-1 1H11M4 14.4H1.6a1 1 0 0 1-1-1V11"/><path d="M3.2 7.3c1.2-1.8 2.6-2.6 4.3-2.6s3.1 0.8 4.3 2.6c-1.2 1.8-2.6 2.6-4.3 2.6S4.4 9.1 3.2 7.3z"/><circle cx="7.5" cy="7.3" r="1.1" fill="#1d64d8" stroke="none"/></svg>
<div class="a" style="left:42px;top:1389px;width:1606px;height:1px;background:#eceef2"></div>
<div class="t" style="left:58.5px;top:1406.90px;font-size:14px;line-height:14px;font-weight:400;color:#1f2937;letter-spacing:0.2px">2026-04-10</div>
<div class="t" style="left:403px;top:1406.90px;font-size:14px;line-height:14px;font-weight:400;color:#1f2937;letter-spacing:0.2px">37,333,799</div>
<div class="t" style="left:725px;top:1406.90px;font-size:14px;line-height:14px;font-weight:400;color:#1f2937;letter-spacing:0.2px">$359.9619</div>
<div class="t" style="left:1075px;top:1406.90px;font-size:14px;line-height:14px;font-weight:400;color:#1f2937;letter-spacing:0.2px">¥ 0.1055</div>
<svg style="left:1476.7px;top:1406.2px" width="14" height="14" viewBox="0 0 15 15" fill="none" stroke="#1d64d8" stroke-width="1.2"><path d="M0.6 3.6V1.6a1 1 0 0 1 1-1h2M11 0.6h2.4a1 1 0 0 1 1 1v2M14.4 11v2.4a1 1 0 0 1-1 1H11M4 14.4H1.6a1 1 0 0 1-1-1V11"/><path d="M3.2 7.3c1.2-1.8 2.6-2.6 4.3-2.6s3.1 0.8 4.3 2.6c-1.2 1.8-2.6 2.6-4.3 2.6S4.4 9.1 3.2 7.3z"/><circle cx="7.5" cy="7.3" r="1.1" fill="#1d64d8" stroke="none"/></svg>
<div class="a" style="left:42px;top:1436px;width:1606px;height:1px;background:#eceef2"></div>
<div class="t" style="left:58.5px;top:1453.90px;font-size:14px;line-height:14px;font-weight:400;color:#1f2937;letter-spacing:0.2px">2026-04-09</div>
<div class="t" style="left:403px;top:1453.90px;font-size:14px;line-height:14px;font-weight:400;color:#1f2937;letter-spacing:0.2px">45,710,650</div>
<div class="t" style="left:725px;top:1453.90px;font-size:14px;line-height:14px;font-weight:400;color:#1f2937;letter-spacing:0.2px">$2398.7436</div>
<div class="t" style="left:1075px;top:1453.90px;font-size:14px;line-height:14px;font-weight:400;color:#1f2937;letter-spacing:0.2px">¥ 1.0616</div>
<svg style="left:1476.7px;top:1453.2px" width="14" height="14" viewBox="0 0 15 15" fill="none" stroke="#1d64d8" stroke-width="1.2"><path d="M0.6 3.6V1.6a1 1 0 0 1 1-1h2M11 0.6h2.4a1 1 0 0 1 1 1v2M14.4 11v2.4a1 1 0 0 1-1 1H11M4 14.4H1.6a1 1 0 0 1-1-1V11"/><path d="M3.2 7.3c1.2-1.8 2.6-2.6 4.3-2.6s3.1 0.8 4.3 2.6c-1.2 1.8-2.6 2.6-4.3 2.6S4.4 9.1 3.2 7.3z"/><circle cx="7.5" cy="7.3" r="1.1" fill="#1d64d8" stroke="none"/></svg>
<div class="a" style="left:42px;top:1483px;width:1606px;height:1px;background:#eceef2"></div>
<div class="t" style="left:58.5px;top:1500.90px;font-size:14px;line-height:14px;font-weight:400;color:#1f2937;letter-spacing:0.2px">2026-04-08</div>
<div class="t" style="left:403px;top:1500.90px;font-size:14px;line-height:14px;font-weight:400;color:#1f2937;letter-spacing:0.2px">62,188,011</div>
<div class="t" style="left:725px;top:1500.90px;font-size:14px;line-height:14px;font-weight:400;color:#1f2937;letter-spacing:0.2px">$203.8144</div>
<div class="t" style="left:1075px;top:1500.90px;font-size:14px;line-height:14px;font-weight:400;color:#1f2937;letter-spacing:0.2px">¥ 3.1406</div>
<svg style="left:1476.7px;top:1500.2px" width="14" height="14" viewBox="0 0 15 15" fill="none" stroke="#1d64d8" stroke-width="1.2"><path d="M0.6 3.6V1.6a1 1 0 0 1 1-1h2M11 0.6h2.4a1 1 0 0 1 1 1v2M14.4 11v2.4a1 1 0 0 1-1 1H11M4 14.4H1.6a1 1 0 0 1-1-1V11"/><path d="M3.2 7.3c1.2-1.8 2.6-2.6 4.3-2.6s3.1 0.8 4.3 2.6c-1.2 1.8-2.6 2.6-4.3 2.6S4.4 9.1 3.2 7.3z"/><circle cx="7.5" cy="7.3" r="1.1" fill="#1d64d8" stroke="none"/></svg>
<div class="a" style="left:42px;top:1530px;width:1606px;height:1px;background:#eceef2"></div>
<div class="t" style="left:58.5px;top:1547.90px;font-size:14px;line-height:14px;font-weight:400;color:#1f2937;letter-spacing:0.2px">2026-04-07</div>
<div class="t" style="left:403px;top:1547.90px;font-size:14px;line-height:14px;font-weight:400;color:#1f2937;letter-spacing:0.2px">24,953,680</div>
<div class="t" style="left:725px;top:1547.90px;font-size:14px;line-height:14px;font-weight:400;color:#1f2937;letter-spacing:0.2px">$147.1401</div>
<div class="t" style="left:1075px;top:1547.90px;font-size:14px;line-height:14px;font-weight:400;color:#1f2937;letter-spacing:0.2px">¥ 1073.0439</div>
<svg style="left:1476.7px;top:1547.2px" width="14" height="14" viewBox="0 0 15 15" fill="none" stroke="#1d64d8" stroke-width="1.2"><path d="M0.6 3.6V1.6a1 1 0 0 1 1-1h2M11 0.6h2.4a1 1 0 0 1 1 1v2M14.4 11v2.4a1 1 0 0 1-1 1H11M4 14.4H1.6a1 1 0 0 1-1-1V11"/><path d="M3.2 7.3c1.2-1.8 2.6-2.6 4.3-2.6s3.1 0.8 4.3 2.6c-1.2 1.8-2.6 2.6-4.3 2.6S4.4 9.1 3.2 7.3z"/><circle cx="7.5" cy="7.3" r="1.1" fill="#1d64d8" stroke="none"/></svg>
<div class="a" style="left:42px;top:1579.5px;width:71px;height:30.5px;border-radius:6px;background:#fff;box-shadow:0 0 2px rgba(0,0,0,0.08)"></div>
<div class="t" style="left:54px;top:1588.20px;font-size:14px;line-height:14px;font-weight:400;color:#1e293b;">10</div>
<svg style="left:87px;top:1590px" width="12" height="8" viewBox="0 0 12 8"><path d="M0.5 1.2h10.7l-5.35 5.6z" fill="#4b5563"/></svg>
<div class="t" style="left:121.3px;top:1588.65px;font-size:13px;line-height:13px;font-weight:400;color:#9ca3af;">条/页</div>
<svg style="left:1547px;top:1587px" width="12" height="14" viewBox="0 0 12 14" fill="none" stroke="#c4c8cf" stroke-width="1.4"><path d="M9.5 2l-6 5 6 5"/></svg>
<div class="a" style="left:1577px;top:1578.5px;width:32px;height:31.5px;border-radius:6px;background:#fff;box-shadow:0 0 2px rgba(0,0,0,0.08)"></div>
<div class="t" style="left:1588.5px;top:1588.20px;font-size:14px;line-height:14px;font-weight:400;color:#1d64d8;">1</div>
<svg style="left:1627px;top:1587px" width="12" height="14" viewBox="0 0 12 14" fill="none" stroke="#c4c8cf" stroke-width="1.4"><path d="M2.5 2l6 5-6 5"/></svg>
</div>
</body></html>
